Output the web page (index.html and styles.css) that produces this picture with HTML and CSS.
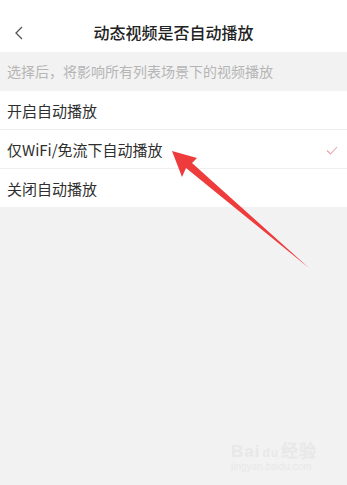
FILE: index.html
```html
<!DOCTYPE html>
<html lang="zh-CN">
<head>
    <meta charset="UTF-8">
    <meta name="viewport" content="width=device-width, initial-scale=1.0">
    <title>动态视频是否自动播放</title>
    <link rel="stylesheet" href="styles.css">
</head>
<body>
<div class="page">
    <div class="nav-bar">
        <svg class="back" width="10" height="14" viewBox="0 0 10 14">
            <polyline points="8,1 2,7 8,13" fill="none" stroke="#555" stroke-width="1.3"/>
        </svg>
        <div class="title">动态视频是否自动播放</div>
    </div>

    <div class="hint">选择后，将影响所有列表场景下的视频播放</div>

    <ul class="options">
        <li class="option">开启自动播放</li>
        <li class="option">
            <span>仅WiFi/免流下自动播放</span>
            <svg class="check" width="12" height="9" viewBox="0 0 12 9">
                <polyline points="1,4.5 4.5,8 11,1" fill="none" stroke="#e8a3ad" stroke-width="1.1"/>
            </svg>
        </li>
        <li class="option">关闭自动播放</li>
    </ul>

    <!-- 标注箭头 -->
    <svg class="arrow" width="347" height="485" viewBox="0 0 347 485">
        <polygon points="172,151 197,158 192,163 309,268 186,168 182,177" fill="#ee3b3b"/>
    </svg>

    <div class="watermark">
        <div class="wm-logo">Bai<span class="wm-du">du</span>经验</div>
        <div class="wm-url">jingyan.baidu.com</div>
    </div>
</div>
</body>
</html>
```

FILE: styles.css
```css
body {
    margin: 0;
    font-family: "Noto Sans CJK SC", "Noto Sans", sans-serif;
    background-color: #f2f2f2;
    color: #333;
}

.page {
    position: relative;
    width: 347px;
    height: 485px;
    overflow: hidden;
    background-color: #f2f2f2;
}

.nav-bar {
    height: 52px;
    background-color: #fff;
    display: flex;
    align-items: center;
    justify-content: center;
    position: relative;
}

.back {
    position: absolute;
    left: 14px;
    top: 26px;
}

.title {
    font-size: 16px;
    font-weight: 500;
    color: #222;
    margin-top: 12px;
}

.hint {
    height: 39px;
    line-height: 39px;
    padding-left: 7px;
    font-size: 14px;
    color: #b5b5b5;
}

.options {
    list-style: none;
    margin: 0;
    padding: 0;
    background-color: #fff;
}

.option {
    height: 38px;
    display: flex;
    align-items: center;
    justify-content: space-between;
    padding: 0 9px 0 7px;
    font-size: 15px;
    color: #2f2f2f;
    border-bottom: 1px solid #eee;
}

.option:last-child {
    border-bottom: none;
}

.check {
    margin-top: 2px;
}

.arrow {
    position: absolute;
    left: 0;
    top: 0;
}

.watermark {
    position: absolute;
    left: 231px;
    top: 437px;
    color: #e8e8e8;
    font-family: "Liberation Sans", sans-serif;
}

.wm-logo {
    font-size: 17px;
    font-weight: bold;
    letter-spacing: 1px;
}

.wm-du {
    font-size: 12px;
    margin: 0 2px;
}

.wm-url {
    font-size: 10px;
    margin-top: -1px;
}
```
